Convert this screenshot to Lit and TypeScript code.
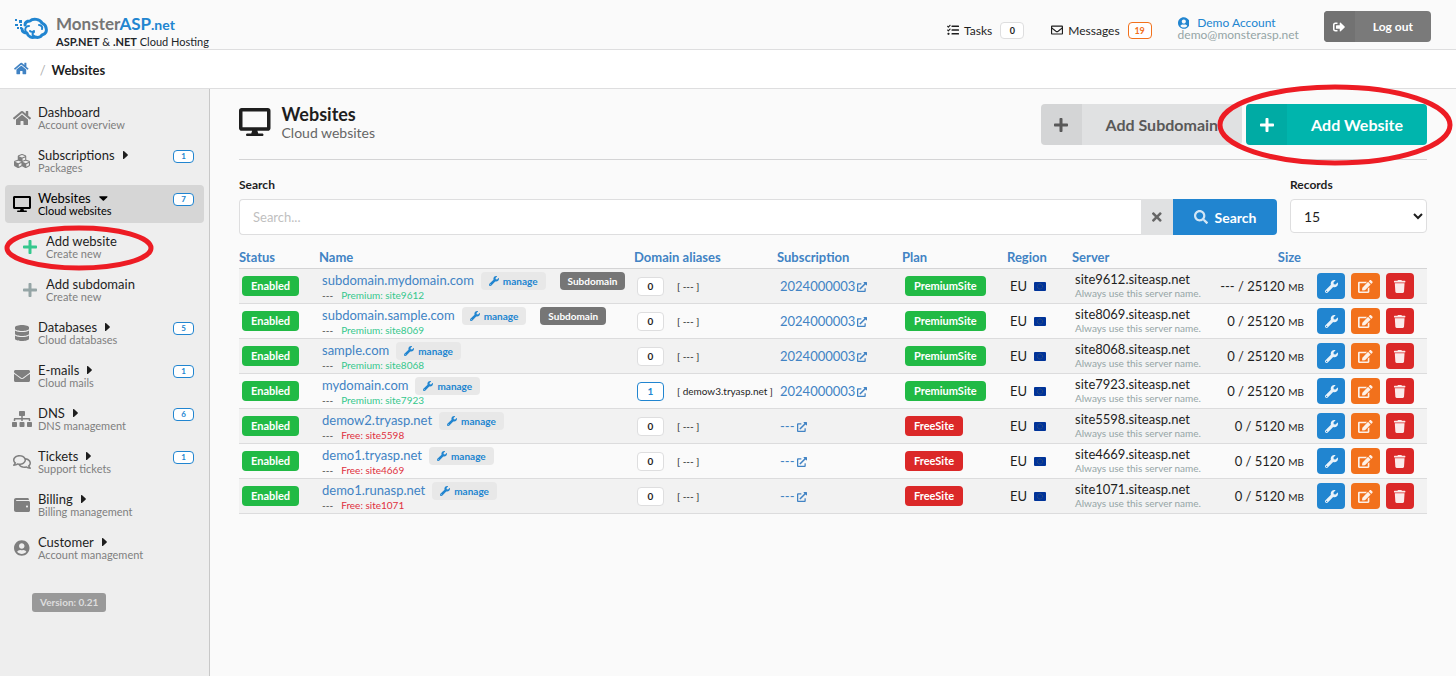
import { LitElement, html, svg, css } from "lit";
import { customElement, property, state } from "lit/decorators.js";
import { classMap } from "lit/directives/class-map.js";

const ICONS: Record<string, [number, string]> = {
  home: [576, "M280.37 148.26L96 300.11V464a16 16 0 0 0 16 16l112.06-.29a16 16 0 0 0 15.92-16V368a16 16 0 0 1 16-16h64a16 16 0 0 1 16 16v95.64a16 16 0 0 0 16 16.05L464 480a16 16 0 0 0 16-16V300L295.67 148.26a12.19 12.19 0 0 0-15.3 0zM571.6 251.47L488 182.56V44.05a12 12 0 0 0-12-12h-56a12 12 0 0 0-12 12v72.61L318.47 43a48 48 0 0 0-61 0L4.34 251.47a12 12 0 0 0-1.6 16.9l25.5 31A12 12 0 0 0 45.15 301l235.22-193.74a12.19 12.19 0 0 1 15.3 0L530.9 301a12 12 0 0 0 16.9-1.6l25.5-31a12 12 0 0 0-1.7-16.93z"],
  cubes: [512, "M488.6 250.2L392 214V105.5c0-15-9.3-28.4-23.4-33.7l-100-37.5c-8.1-3.1-17.1-3.1-25.3 0l-100 37.5c-14.1 5.3-23.4 18.7-23.4 33.7V214l-96.6 36.2C9.3 255.5 0 268.9 0 283.9V394c0 13.6 7.7 26.1 19.9 32.2l100 50c10.1 5.1 22.1 5.1 32.2 0l103.9-52 103.9 52c10.1 5.1 22.1 5.1 32.2 0l100-50c12.2-6.1 19.9-18.6 19.9-32.2V283.9c0-15-9.3-28.4-23.4-33.7zM358 214.8l-85 31.9v-68.2l85-37v73.3zM154 104.1l102-38.2 102 38.2v.6l-102 41.4-102-41.4v-.6zm84 291.1l-85 42.5v-79.1l85-38.8v75.4zm0-112l-102 41.4-102-41.4v-.6l102-38.2 102 38.2v.6zm240 112l-85 42.5v-79.1l85-38.8v75.4zm0-112l-102 41.4-102-41.4v-.6l102-38.2 102 38.2v.6z"],
  desktop: [576, "M528 0H48C21.5 0 0 21.5 0 48v320c0 26.5 21.5 48 48 48h192l-16 48h-72c-13.3 0-24 10.7-24 24s10.7 24 24 24h272c13.3 0 24-10.7 24-24s-10.7-24-24-24h-72l-16-48h192c26.5 0 48-21.5 48-48V48c0-26.5-21.5-48-48-48zm-16 352H64V64h448v288z"],
  plus: [448, "M416 208H272V64c0-17.67-14.33-32-32-32h-32c-17.67 0-32 14.33-32 32v144H32c-17.67 0-32 14.33-32 32v32c0 17.67 14.33 32 32 32h144v144c0 17.67 14.33 32 32 32h32c17.67 0 32-14.33 32-32V304h144c17.67 0 32-14.33 32-32v-32c0-17.67-14.33-32-32-32z"],
  database: [448, "M448 73.143v45.714C448 159.143 347.667 192 224 192S0 159.143 0 118.857V73.143C0 32.857 100.333 0 224 0s224 32.857 224 73.143zM448 176v102.857C448 319.143 347.667 352 224 352S0 319.143 0 278.857V176c48.125 33.143 136.208 48.572 224 48.572S399.874 209.143 448 176zm0 160v102.857C448 479.143 347.667 512 224 512S0 479.143 0 438.857V336c48.125 33.143 136.208 48.572 224 48.572S399.874 369.143 448 336z"],
  envelope: [512, "M502.3 190.8c3.9-3.1 9.7-.2 9.7 4.7V400c0 26.5-21.5 48-48 48H48c-26.5 0-48-21.5-48-48V195.6c0-5 5.7-7.8 9.7-4.7 22.4 17.4 52.1 39.5 154.1 113.6 21.1 15.4 56.7 47.8 92.2 47.6 35.7.3 72-32.8 92.3-47.6 102-74.1 131.6-96.3 154-113.7zM256 320c23.2.4 56.6-29.2 73.4-41.4 132.7-96.3 142.8-104.7 173.4-128.7 5.8-4.5 9.2-11.5 9.2-18.9v-19c0-26.5-21.5-48-48-48H48c-26.5 0-48 21.5-48 48v19c0 7.4 3.4 14.3 9.2 18.9 30.6 23.9 40.7 32.4 173.4 128.7 16.8 12.2 50.2 41.8 73.4 41.4z"],
  envelopeOpen: [512, "M464 64H48C21.49 64 0 85.49 0 112v288c0 26.51 21.49 48 48 48h416c26.51 0 48-21.49 48-48V112c0-26.51-21.49-48-48-48zm0 48v40.805c-22.422 18.259-58.168 46.651-134.587 106.49-16.841 13.247-50.201 45.072-73.413 44.701-23.208.375-56.579-31.459-73.413-44.701C106.18 199.465 70.425 171.067 48 152.805V112h416zM48 400V214.398c22.914 18.251 55.409 43.862 104.938 82.646 21.857 17.205 60.134 55.186 103.062 54.955 42.717.231 80.509-37.199 103.053-54.947 49.528-38.783 82.032-64.401 104.947-82.653V400H48z"],
  sitemap: [640, "M128 352H32c-17.67 0-32 14.33-32 32v96c0 17.67 14.33 32 32 32h96c17.67 0 32-14.33 32-32v-96c0-17.67-14.33-32-32-32zm-24-80h192v48h48v-48h192v48h48v-57.59c0-21.17-17.23-38.41-38.41-38.41H344v-64h40c17.67 0 32-14.33 32-32V32c0-17.67-14.33-32-32-32H256c-17.67 0-32 14.33-32 32v96c0 17.67 14.33 32 32 32h40v64H94.41C73.23 224 56 241.23 56 262.41V320h48v-48zm264 80h-96c-17.67 0-32 14.33-32 32v96c0 17.67 14.33 32 32 32h96c17.67 0 32-14.33 32-32v-96c0-17.67-14.33-32-32-32zm240 0h-96c-17.67 0-32 14.33-32 32v96c0 17.67 14.33 32 32 32h96c17.67 0 32-14.33 32-32v-96c0-17.67-14.33-32-32-32z"],
  comments: [576, "M532 386.2c27.5-27.1 44-61.1 44-98.2 0-80-76.5-146.1-176.2-157.9C368.3 72.5 294.3 32 208 32 93.1 32 0 103.6 0 192c0 37 16.5 71 44 98.2-15.3 30.7-37.3 54.5-37.7 54.9-6.3 6.7-8.1 16.5-4.4 25 3.6 8.5 12 14 21.2 14 53.5 0 96.7-20.2 125.2-38.8 9.2 2.1 18.7 3.7 28.4 4.9C208.1 407.6 281.8 448 368 448c20.8 0 40.8-2.4 59.8-6.8C456.3 459.7 499.4 480 553 480c9.2 0 17.5-5.5 21.2-14 3.6-8.5 1.9-18.3-4.4-25-.4-.3-22.5-24.1-37.8-54.8zm-392.8-92.3L122.1 305c-14.1 9.1-28.5 16.3-43.1 21.4 2.7-4.7 5.4-9.7 8-14.8l15.5-31.1L77.7 256C64.2 242.6 48 220.7 48 192c0-60.7 73.3-112 160-112s160 51.3 160 112-73.3 112-160 112c-16.5 0-33-1.9-49-5.6l-19.8-4.5zM498.3 352l-24.7 24.4 15.5 31.1c2.6 5.1 5.3 10.1 8 14.8-14.6-5.1-29-12.3-43.1-21.4l-17.1-11.1-19.9 4.6c-16 3.7-32.5 5.6-49 5.6-54 0-102.2-20.1-131.3-49.7C338 339.5 416 272.9 416 192c0-3.4-.4-6.7-.7-10C479.7 196.5 528 238.8 528 288c0 28.7-16.2 50.6-29.7 64z"],
  wallet: [512, "M461.2 128H80c-8.84 0-16-7.16-16-16s7.16-16 16-16h384c8.84 0 16-7.16 16-16 0-26.51-21.49-48-48-48H64C28.65 32 0 60.65 0 96v320c0 35.35 28.65 64 64 64h397.2c28.02 0 50.8-21.53 50.8-48V176c0-26.47-22.78-48-50.8-48zM416 336c-17.67 0-32-14.33-32-32s14.33-32 32-32 32 14.33 32 32-14.33 32-32 32z"],
  user: [496, "M248 8C111 8 0 119 0 256s111 248 248 248 248-111 248-248S385 8 248 8zm0 96c48.6 0 88 39.4 88 88s-39.4 88-88 88-88-39.4-88-88 39.4-88 88-88zm0 344c-58.7 0-111.3-26.6-146.5-68.2 18.8-35.4 55.6-59.8 98.5-59.8 2.4 0 4.8.4 7.1 1.1 13 4.2 26.6 6.9 40.9 6.9 14.3 0 28-2.7 40.9-6.9 2.3-.7 4.7-1.1 7.1-1.1 42.9 0 79.7 24.4 98.5 59.8C359.3 421.4 306.7 448 248 448z"],
  wrench: [512, "M507.73 109.1c-2.24-9.03-13.54-12.09-20.12-5.51l-74.36 74.36-67.88-11.31-11.31-67.88 74.36-74.36c6.62-6.62 3.43-17.9-5.66-20.16-47.38-11.74-99.55.91-136.58 37.93-39.64 39.64-50.55 97.1-34.05 147.2L18.74 402.76c-24.99 24.99-24.99 65.51 0 90.5 24.99 24.99 65.51 24.99 90.5 0l213.21-213.21c50.12 16.71 107.47 5.68 147.37-34.22 37.07-37.07 49.7-89.32 37.91-136.73zM64 472c-13.25 0-24-10.75-24-24 0-13.26 10.75-24 24-24s24 10.74 24 24c0 13.25-10.75 24-24 24z"],
  edit: [576, "M402.6 83.2l90.2 90.2c3.8 3.8 3.8 10 0 13.8L274.4 405.6l-92.8 10.3c-12.4 1.4-22.9-9.1-21.5-21.5l10.3-92.8L388.8 83.2c3.8-3.8 10-3.8 13.8 0zm162-22.9l-48.8-48.8c-15.2-15.2-39.9-15.2-55.2 0l-35.4 35.4c-3.8 3.8-3.8 10 0 13.8l90.2 90.2c3.8 3.8 10 3.8 13.8 0l35.4-35.4c15.2-15.3 15.2-40 0-55.2zM384 346.2V448H64V128h229.8c3.2 0 6.2-1.3 8.5-3.5l40-40c7.6-7.6 2.2-20.5-8.5-20.5H48C21.5 64 0 85.5 0 112v352c0 26.5 21.5 48 48 48h352c26.5 0 48-21.5 48-48V306.2c0-10.7-12.9-16-20.5-8.5l-40 40c-2.2 2.3-3.5 5.3-3.5 8.5z"],
  trash: [448, "M432 32H312l-9.4-18.7A24 24 0 0 0 281.1 0H166.8a23.72 23.72 0 0 0-21.4 13.3L136 32H16A16 16 0 0 0 0 48v32a16 16 0 0 0 16 16h416a16 16 0 0 0 16-16V48a16 16 0 0 0-16-16zM53.2 467a48 48 0 0 0 47.9 45h245.8a48 48 0 0 0 47.9-45L416 128H32z"],
  search: [512, "M505 442.7L405.3 343c-4.5-4.5-10.6-7-17-7H372c27.6-35.3 44-79.7 44-128C416 93.1 322.9 0 208 0S0 93.1 0 208s93.1 208 208 208c48.3 0 92.7-16.4 128-44v16.3c0 6.4 2.5 12.5 7 17l99.7 99.7c9.4 9.4 24.6 9.4 33.9 0l28.3-28.3c9.4-9.4 9.4-24.6.1-34zM208 336c-70.7 0-128-57.2-128-128 0-70.7 57.2-128 128-128 70.7 0 128 57.2 128 128 0 70.7-57.2 128-128 128z"],
  times: [352, "M242.72 256l100.07-100.07c12.28-12.28 12.28-32.19 0-44.48l-22.24-22.24c-12.28-12.28-32.19-12.28-44.48 0L176 189.28 75.93 89.21c-12.28-12.28-32.19-12.28-44.48 0L9.21 111.45c-12.28 12.28-12.28 32.19 0 44.48L109.28 256 9.21 356.07c-12.28 12.28-12.28 32.19 0 44.48l22.24 22.24c12.28 12.28 32.2 12.28 44.48 0L176 322.72l100.07 100.07c12.28 12.28 32.2 12.28 44.48 0l22.24-22.24c12.28-12.28 12.28-32.19 0-44.48L242.72 256z"],
  signOut: [512, "M497 273L329 441c-15 15-41 4.5-41-17v-96H152c-13.3 0-24-10.7-24-24v-96c0-13.3 10.7-24 24-24h136V88c0-21.4 25.9-32 41-17l168 168c9.3 9.4 9.3 24.6 0 34zM192 436v-40c0-6.6-5.4-12-12-12H96c-17.7 0-32-14.3-32-32V160c0-17.7 14.3-32 32-32h84c6.6 0 12-5.4 12-12V76c0-6.6-5.4-12-12-12H96c-53 0-96 43-96 96v192c0 53 43 96 96 96h84c6.6 0 12-5.4 12-12z"],
  external: [512, "M432,320H400a16,16,0,0,0-16,16V448H64V128H208a16,16,0,0,0,16-16V80a16,16,0,0,0-16-16H48A48,48,0,0,0,0,112V464a48,48,0,0,0,48,48H400a48,48,0,0,0,48-48V336A16,16,0,0,0,432,320ZM488,0h-128c-21.37,0-32.05,25.91-17,41l35.73,35.73L135,320.37a24,24,0,0,0,0,34L157.67,377a24,24,0,0,0,34,0L435.28,133.32,471,169c15,15,41,4.5,41-17V24A24,24,0,0,0,488,0Z"],
  tasks: [512, "M139.61 35.5a12 12 0 0 0-17 0L58.93 98.81l-22.7-22.12a12 12 0 0 0-17 0L3.53 92.41a12 12 0 0 0 0 17l47.59 47.4a12.78 12.78 0 0 0 17.61 0l15.59-15.62L156.52 69a12.09 12.09 0 0 0 .09-17zm0 159.19a12 12 0 0 0-17 0l-63.68 63.72-22.7-22.1a12 12 0 0 0-17 0L3.53 252a12 12 0 0 0 0 17L51 316.5a12.77 12.77 0 0 0 17.6 0l15.7-15.69 72.2-72.22a12 12 0 0 0 .09-16.9zM64 368c-26.49 0-48.59 21.5-48.59 48S37.53 464 64 464a48 48 0 0 0 0-96zm432 16H208a16 16 0 0 0-16 16v32a16 16 0 0 0 16 16h288a16 16 0 0 0 16-16v-32a16 16 0 0 0-16-16zm0-320H208a16 16 0 0 0-16 16v32a16 16 0 0 0 16 16h288a16 16 0 0 0 16-16V80a16 16 0 0 0-16-16zm0 160H208a16 16 0 0 0-16 16v32a16 16 0 0 0 16 16h288a16 16 0 0 0 16-16v-32a16 16 0 0 0-16-16z"],
  caretRight: [192, "M0 384V128c0-20 20-26 32-14l140 126c10 9 10 23 0 32L32 398c-12 12-32 6-32-14z"],
  caretDown: [320, "M31 192h258c18 0 27 21 14 34L174 355c-8 8-20 8-28 0L17 226c-13-13-4-34 14-34z"],
};

/* Shared typographic reset for every element of the panel. */
const base = css`
  :host {
    font-family: Lato, "Liberation Sans", sans-serif;
    color: #1e1e1e;
  }
  *, *::before, *::after { box-sizing: border-box; }
  a { color: #4183c4; text-decoration: none; }
  button {
    font: inherit;
    border: 0;
    padding: 0;
    margin: 0;
    cursor: pointer;
  }
`;

@customElement("ui-icon")
class UiIcon extends LitElement {
  @property() name = "home";
  static styles = css`
    :host { display: inline-flex; flex: none; }
    svg { display: block; height: 1em; width: auto; fill: currentColor; }
  `;
  render() {
    const [w, d] = ICONS[this.name];
    return html`<svg viewBox="0 0 ${w} 512" aria-hidden="true">${svg`<path d=${d}></path>`}</svg>`;
  }
}

@customElement("red-ring")
class RedRing extends LitElement {
  @property({ type: Number }) rx = 70;
  @property({ type: Number }) ry = 20;
  static styles = css`
    :host { display: block; pointer-events: none; }
    svg { display: block; overflow: visible; }
  `;
  render() {
    const w = this.rx * 2 + 6;
    const h = this.ry * 2 + 6;
    return html`<svg width=${w} height=${h} viewBox="0 0 ${w} ${h}" aria-hidden="true">
      ${svg`<ellipse cx=${w / 2} cy=${h / 2} rx=${this.rx} ry=${this.ry} fill="none" stroke="#ed1c24" stroke-width="5"></ellipse>`}
    </svg>`;
  }
}

@customElement("top-bar")
class TopBar extends LitElement {
  static styles = [base, css`
    :host { display: block; }
    .bar {
      display: flex;
      align-items: flex-start;
      height: 50px;
      padding: 11px 25px 0 14px;
      border-bottom: 1px solid #dededf;
      background: #fafafa;
    }
    .brand { display: flex; align-items: flex-start; gap: 8px; color: #212529; padding-top: 3px; }
    .logo { width: 34px; height: 26px; margin-top: 3px; }
    .name { font-size: 17px; font-weight: 700; line-height: 20px; color: #767676; }
    .asp { color: #2185d0; }
    .net { color: #2185d0; font-size: 14px; }
    .tag { font-size: 11px; line-height: 14px; }
    .right { display: flex; align-items: flex-start; margin-left: auto; font-size: 12px; }
    .link { display: flex; align-items: center; color: #1e1e1e; height: 38px; }
    .link ui-icon { font-size: 12px; margin-right: 5px; }
    .count {
      font-size: 9px;
      font-weight: 700;
      line-height: 15px;
      min-width: 24px;
      text-align: center;
      border: 1px solid #dededf;
      border-radius: 4px;
      background: #fff;
      margin-left: 8px;
    }
    .orange { border-color: #f2711c; color: #f2711c; }
    .messages { margin-left: 27px; }
    .account { margin-left: 26px; padding-top: 6px; line-height: 12px; }
    .who { display: flex; align-items: center; gap: 8px; color: #2185d0; }
    .who ui-icon { font-size: 12px; }
    .mail { color: #95a5a6; }
    .logout {
      display: flex;
      align-items: stretch;
      height: 31px;
      margin-left: 25px;
      border-radius: 4px;
      overflow: hidden;
      background: #7a7a7a;
      color: #fff;
      font-size: 12px;
      font-weight: 700;
    }
    .cap { display: flex; align-items: center; justify-content: center; width: 31px; background: #727272; }
    .txt { display: flex; align-items: center; padding: 0 18px; }
  `];
  render() {
    return html`<header class="bar">
      <a class="brand" href="#home">
        <svg class="logo" viewBox="0 0 34 26" fill="none" stroke="#2185d0" aria-hidden="true">
          <path fill="#2185d0" stroke="none" d="M1 2h2v2H1zM5 3h3v3H5zM1 7h3v2H1zM6 7h2v2H6zM3 10h2v2H3zM6 10h2v2H6z" />
          <path stroke-width="3" stroke-linejoin="round" stroke-linecap="round" d="M8 12c0 3 3 4 5 4 1 4 5 5 8 4 3 1 6 0 7-2 4-1 5-4 4-7 0-3-2-4-4-5-2-4-9-5-12-2-3 0-5 1-5 4" />
          <path stroke-width="2" stroke-linecap="round" d="M12 15c-2-3 0-6 3-6M16 14c1 1 3 1 4 0M20 19c-2-1-2-3 0-4M25 8c2 0 4 2 3 4" />
        </svg>
        <div>
          <div class="name">Monster<span class="asp">ASP</span><span class="net">.net</span></div>
          <div class="tag"><b>ASP.NET</b> &amp; <b>.NET</b> Cloud Hosting</div>
        </div>
      </a>
      <nav class="right" aria-label="Account">
        <a class="link" href="#tasks"><ui-icon name="tasks"></ui-icon>Tasks<span class="count">0</span></a>
        <a class="link messages" href="#messages"><ui-icon name="envelopeOpen"></ui-icon>Messages<span class="count orange">19</span></a>
        <a class="account" href="#account">
          <div class="who"><ui-icon name="user"></ui-icon>Demo Account</div>
          <div class="mail">demo@monsterasp.net</div>
        </a>
        <button class="logout" type="button">
          <span class="cap"><ui-icon name="signOut"></ui-icon></span><span class="txt">Log out</span>
        </button>
      </nav>
    </header>`;
  }
}

interface MenuItem {
  icon: string;
  title: string;
  sub: string;
  caret?: string;
  count?: number;
  active?: boolean;
  child?: string;
  ring?: boolean;
}

const MENU: MenuItem[] = [
  { icon: "home", title: "Dashboard", sub: "Account overview" },
  { icon: "cubes", title: "Subscriptions", sub: "Packages", caret: "caretRight", count: 1 },
  { icon: "desktop", title: "Websites", sub: "Cloud websites", caret: "caretDown", count: 7, active: true },
  { icon: "plus", title: "Add website", sub: "Create new", child: "green", ring: true },
  { icon: "plus", title: "Add subdomain", sub: "Create new", child: "grey" },
  { icon: "database", title: "Databases", sub: "Cloud databases", caret: "caretRight", count: 5 },
  { icon: "envelope", title: "E-mails", sub: "Cloud mails", caret: "caretRight", count: 1 },
  { icon: "sitemap", title: "DNS", sub: "DNS management", caret: "caretRight", count: 6 },
  { icon: "comments", title: "Tickets", sub: "Support tickets", caret: "caretRight", count: 1 },
  { icon: "wallet", title: "Billing", sub: "Billing management", caret: "caretRight" },
  { icon: "user", title: "Customer", sub: "Account management", caret: "caretRight" },
];

@customElement("side-menu")
class SideMenu extends LitElement {
  static styles = [base, css`
    :host { display: block; width: 210px; flex: none; background: #eee; border-right: 1px solid #c8c8c8; }
    .menu { display: flex; flex-direction: column; gap: 5px; padding: 10px 5px 0; }
    .item {
      position: relative;
      display: flex;
      align-items: flex-start;
      height: 38px;
      padding: 6px 10px 0 6px;
      border-radius: 4px;
      color: #1e1e1e;
    }
    .icon { width: 22px; display: flex; justify-content: center; font-size: 16px; color: #7f7f7f; margin: 5px 5px 0 0; }
    .child { padding-left: 14px; }
    .green .icon { color: #35c88d; }
    .grey .icon { color: #95a5a6; }
    .active { background: #d6d6d6; color: #000; }
    .active .icon { color: #000; }
    .title { display: flex; align-items: center; gap: 8px; font-size: 13px; line-height: 14px; }
    .title ui-icon { font-size: 14px; }
    .sub { font-size: 11px; line-height: 12px; color: #7f7f7f; }
    .active .sub { color: #000; }
    .count {
      margin: 2px 0 0 auto;
      width: 21px;
      font-size: 8px;
      font-weight: 700;
      line-height: 11px;
      text-align: center;
      border: 1px solid #2185d0;
      border-radius: 4px;
      background: #fff;
      color: #2185d0;
    }
    .ring { position: absolute; left: -1px; top: -3px; z-index: 1; }
    .version {
      display: inline-block;
      margin: 26px 0 0 32px;
      padding: 0 8px;
      border-radius: 3px;
      background: #999;
      color: #ddd;
      font-size: 10px;
      font-weight: 700;
      line-height: 19px;
    }
  `];
  render() {
    return html`
      <nav class="menu" aria-label="Main menu">
        ${MENU.map((m) => html`
          <a href="#${m.title}" class=${classMap({
            item: true, active: !!m.active, child: !!m.child,
            green: m.child === "green", grey: m.child === "grey",
          })}>
            <span class="icon"><ui-icon name=${m.icon}></ui-icon></span>
            <span>
              <div class="title">${m.title}${m.caret ? html`<ui-icon name=${m.caret}></ui-icon>` : ""}</div>
              <div class="sub">${m.sub}</div>
            </span>
            ${m.count ? html`<span class="count">${m.count}</span>` : ""}
            ${m.ring ? html`<red-ring class="ring" rx="72" ry="20"></red-ring>` : ""}
          </a>`)}
      </nav>
      <span class="version">Version: 0.21</span>`;
  }
}

interface Site {
  name: string;
  site: string;
  premium: boolean;
  sub?: boolean;
  alias?: string;
  size: string;
}

const SITES: Site[] = [
  { name: "subdomain.mydomain.com", site: "site9612", premium: true, sub: true, size: "--- / 25120" },
  { name: "subdomain.sample.com", site: "site8069", premium: true, sub: true, size: "0 / 25120" },
  { name: "sample.com", site: "site8068", premium: true, size: "0 / 25120" },
  { name: "mydomain.com", site: "site7923", premium: true, alias: "demow3.tryasp.net", size: "0 / 25120" },
  { name: "demow2.tryasp.net", site: "site5598", premium: false, size: "0 / 5120" },
  { name: "demo1.tryasp.net", site: "site4669", premium: false, size: "0 / 5120" },
  { name: "demo1.runasp.net", site: "site1071", premium: false, size: "0 / 5120" },
];

@customElement("site-table")
class SiteTable extends LitElement {
  static styles = [base, css`
    :host { display: block; }
    table { width: 100%; table-layout: fixed; border-collapse: separate; border-spacing: 0; font-size: 13px; }
    th {
      height: 22px;
      padding: 0;
      text-align: left;
      font-weight: 700;
      line-height: 20px;
      color: #4183c4;
      border-bottom: 1px solid #d4d4d5;
      vertical-align: top;
    }
    td { height: 35px; padding: 0 3px; border-bottom: 1px solid #dcdcdd; vertical-align: middle; white-space: nowrap; }
    tr:nth-child(odd) td { background: #f2f2f2; }
    .c-status { width: 80px; }
    .c-alias { width: 143px; }
    .c-subscription { width: 125px; }
    .c-plan { width: 105px; }
    .c-region { width: 65px; }
    .c-server { width: 132px; }
    .c-size { width: 103px; }
    .c-actions { width: 120px; }
    th.size { text-align: right; padding-right: 6px; }
    td.size { text-align: right; }
    .unit { font-size: 10px; }
    .label {
      display: inline-block;
      border-radius: 4px;
      padding: 0 9px;
      font-size: 11px;
      font-weight: 700;
      line-height: 20px;
      color: #fff;
    }
    .ok { background: #21ba45; }
    .bad { background: #db2828; }
    .line { display: flex; align-items: flex-start; height: 18px; line-height: 17px; }
    .manage {
      display: flex;
      align-items: center;
      gap: 4px;
      margin-left: 7px;
      padding: 0 8px;
      height: 18px;
      border-radius: 4px;
      background: #e8e8e8;
      color: #2185d0;
      font-size: 10px;
      font-weight: 700;
    }
    .tagged { background: #767676; color: #fff; font-size: 10px; line-height: 18px; padding: 0 8px; margin-left: 14px; }
    .meta { display: flex; gap: 8px; font-size: 10px; line-height: 10px; color: #444; }
    .premium { color: #35c88d; }
    .free { color: #e03040; }
    .aliases { display: flex; align-items: center; gap: 13px; font-size: 10px; }
    .num {
      width: 27px;
      font-size: 10px;
      font-weight: 700;
      line-height: 17px;
      text-align: center;
      border: 1px solid #dededf;
      border-radius: 4px;
      background: #fff;
    }
    .blue { border-color: #2185d0; color: #2185d0; }
    .ext { display: flex; align-items: center; gap: 2px; }
    .ext ui-icon { font-size: 10px; padding-top: 2px; }
    .region { display: flex; align-items: center; gap: 7px; }
    .flag { width: 12px; height: 9px; }
    .server { line-height: 15px; }
    .hint { font-size: 10px; line-height: 13px; color: #95a5a6; }
    .actions { display: flex; gap: 6px; padding-left: 7px; }
    .act {
      width: 28px;
      height: 26px;
      border-radius: 4px;
      color: #fff;
      font-size: 13px;
      display: flex;
      align-items: center;
      justify-content: center;
    }
    .act ui-icon { opacity: 0.9; }
    .edit { width: 29px; }
    .c-blue { background: #2185d0; }
    .c-orange { background: #f2711c; }
    .c-red { background: #db2828; }
  `];
  private row(s: Site) {
    return html`<tr>
      <td><span class="label ok">Enabled</span></td>
      <td>
        <div class="line">
          <a href="#${s.name}">${s.name}</a>
          <button class="manage" type="button"><ui-icon name="wrench"></ui-icon>manage</button>
          ${s.sub ? html`<span class="label tagged">Subdomain</span>` : ""}
        </div>
        <div class="meta"><span>---</span>
          <span class=${s.premium ? "premium" : "free"}>${s.premium ? "Premium" : "Free"}: ${s.site}</span></div>
      </td>
      <td><div class="aliases">
        <span class=${classMap({ num: true, blue: !!s.alias })}>${s.alias ? 1 : 0}</span>
        <span>[ ${s.alias ?? "---"} ]</span></div></td>
      <td><a class="ext" href="#subscription">${s.premium ? "2024000003" : "---"}<ui-icon name="external"></ui-icon></a></td>
      <td><span class="label ${s.premium ? "ok" : "bad"}">${s.premium ? "PremiumSite" : "FreeSite"}</span></td>
      <td><div class="region">EU
        <svg class="flag" viewBox="0 0 12 9" aria-hidden="true">
          <rect width="12" height="9" rx="1" fill="#039"></rect>
          <circle cx="6" cy="4.5" r="2.6" fill="none" stroke="#fc0" stroke-opacity=".5" stroke-width=".6" stroke-dasharray=".6 .76"></circle>
        </svg></div></td>
      <td><div class="server">${s.site}.siteasp.net</div><div class="hint">Always use this server name.</div></td>
      <td class="size">${s.size} <span class="unit">MB</span></td>
      <td><div class="actions">
        <button class="act c-blue" type="button" aria-label="Manage ${s.name}"><ui-icon name="wrench"></ui-icon></button>
        <button class="act edit c-orange" type="button" aria-label="Edit ${s.name}"><ui-icon name="edit"></ui-icon></button>
        <button class="act c-red" type="button" aria-label="Delete ${s.name}"><ui-icon name="trash"></ui-icon></button>
      </div></td>
    </tr>`;
  }
  render() {
    return html`<table>
      <colgroup>
        <col class="c-status"><col><col class="c-alias"><col class="c-subscription"><col class="c-plan">
        <col class="c-region"><col class="c-server"><col class="c-size"><col class="c-actions">
      </colgroup>
      <thead><tr>
        <th>Status</th><th>Name</th><th>Domain aliases</th><th>Subscription</th><th>Plan</th>
        <th>Region</th><th>Server</th><th class="size">Size</th><th></th>
      </tr></thead>
      <tbody>${SITES.map((s) => this.row(s))}</tbody>
    </table>`;
  }
}

@customElement("app-root")
class AppRoot extends LitElement {
  @state() private query = "";
  static styles = [base, css`
    :host { display: flex; flex-direction: column; min-height: 100vh; background: #fafafa; }
    .crumbs {
      display: flex;
      align-items: center;
      height: 39px;
      padding: 2px 14px 0;
      border-bottom: 1px solid #dededf;
      background: #fff;
      font-size: 13px;
    }
    .crumbs ui-icon { font-size: 13px; }
    .slash { color: #b0b0b0; margin: 0 6px 0 11px; }
    .body { display: flex; flex: 1; }
    .main { flex: 1; min-width: 0; padding: 15px 29px 20px; }
    .head { display: flex; align-items: flex-start; height: 56px; border-bottom: 1px solid #d4d4d5; }
    .head .big { font-size: 28px; margin-top: 4px; }
    .titles { margin-left: 11px; }
    h1 { margin: 0; font-size: 18px; font-weight: 700; line-height: 20px; }
    .under { font-size: 14px; line-height: 18px; color: #666; }
    .buttons { display: flex; gap: 4px; margin-left: auto; }
    .large {
      position: relative;
      display: flex;
      height: 41px;
      border-radius: 4px;
      font-size: 16px;
      font-weight: 700;
      background: #e0e1e2;
      color: #595959;
    }
    .cap {
      width: 41px;
      display: flex;
      align-items: center;
      justify-content: center;
      border-radius: 4px 0 0 4px;
      background: rgba(0, 0, 0, 0.05);
    }
    .txt { display: flex; align-items: center; align-self: center; padding: 0 24px; }
    .teal { background: #00b5ad; color: #fff; }
    .ring { position: absolute; left: -29px; top: -20px; z-index: 1; }
    .filters { display: grid; grid-template-columns: 1fr 137px; gap: 13px; margin-top: 16px; }
    .field { display: flex; flex-direction: column; }
    label { font-size: 12px; font-weight: 700; line-height: 18px; margin-bottom: 5px; }
    .group { display: flex; height: 36px; }
    input {
      flex: 1;
      min-width: 0;
      padding: 0 13px;
      border: 1px solid #dededf;
      border-right: 0;
      border-radius: 4px 0 0 4px;
      background: #fff;
      font: inherit;
      font-size: 13px;
      color: #1e1e1e;
    }
    input::placeholder { color: #bfbfbf; }
    .clear { width: 32px; display: flex; align-items: center; justify-content: center; background: #e0e1e2; color: #666; font-size: 14px; }
    .go {
      width: 104px;
      display: flex;
      align-items: center;
      justify-content: center;
      gap: 7px;
      border-radius: 0 4px 4px 0;
      background: #2185d0;
      color: #fff;
      font-size: 14px;
      font-weight: 700;
    }
    .go ui-icon { opacity: 0.8; }
    select {
      height: 34px;
      padding: 0 9px;
      border: 1px solid #dededf;
      border-radius: 4px;
      background: #fff;
      font: inherit;
      font-size: 14px;
      color: #1e1e1e;
    }
    site-table { margin-top: 12px; }
  `];
  render() {
    return html`
      <top-bar></top-bar>
      <nav class="crumbs" aria-label="Breadcrumb">
        <a href="#home" aria-label="Home"><ui-icon name="home"></ui-icon></a>
        <span class="slash">/</span><b>Websites</b>
      </nav>
      <div class="body">
        <side-menu></side-menu>
        <main class="main">
          <div class="head">
            <ui-icon class="big" name="desktop"></ui-icon>
            <div class="titles"><h1>Websites</h1><div class="under">Cloud websites</div></div>
            <div class="buttons">
              <button class="large" type="button">
                <span class="cap"><ui-icon name="plus"></ui-icon></span><span class="txt">Add Subdomain</span>
              </button>
              <button class="large teal" type="button">
                <span class="cap"><ui-icon name="plus"></ui-icon></span><span class="txt">Add Website</span>
                <red-ring class="ring" rx="115" ry="38"></red-ring>
              </button>
            </div>
          </div>
          <form class="filters" @submit=${(e: Event) => e.preventDefault()}>
            <div class="field">
              <label for="q">Search</label>
              <div class="group">
                <input id="q" type="text" placeholder="Search..." .value=${this.query}
                  @input=${(e: Event) => (this.query = (e.target as HTMLInputElement).value)}>
                <button class="clear" type="button" aria-label="Clear" @click=${() => (this.query = "")}><ui-icon name="times"></ui-icon></button>
                <button class="go" type="submit"><ui-icon name="search"></ui-icon>Search</button>
              </div>
            </div>
            <div class="field">
              <label for="records">Records</label>
              <select id="records"><option>15</option><option>30</option><option>50</option></select>
            </div>
          </form>
          <site-table></site-table>
        </main>
      </div>`;
  }
}
